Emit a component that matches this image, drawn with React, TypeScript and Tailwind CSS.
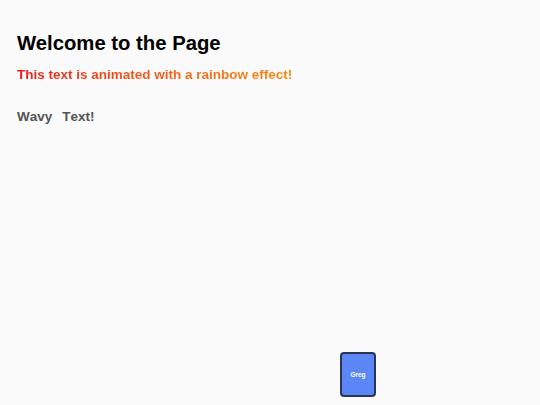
export default function App() {
  const wavy = "Wavy Text!".split("");

  return (
    <div className="relative h-[405px] w-[540px] overflow-hidden bg-[#fafafa] font-['Liberation_Sans',Arial,sans-serif]">
      <div className="px-[17px] pt-[31px]">
        <h1 className="text-[20.3px] font-bold leading-[24px] text-black">Welcome to the Page</h1>

        <p className="mt-[11px] inline-block bg-gradient-to-r from-[#e8141c] to-[#f58a12] bg-clip-text text-[13.5px] font-bold leading-[18px] text-transparent">
          This text is animated with a rainbow effect!
        </p>

        <div className="mt-[22px] flex text-[13.5px] font-bold leading-[18px] text-[#555555]">
          {wavy.map((ch, i) =>
            ch === " " ? (
              <span key={i} className="inline-block w-[10px]" />
            ) : (
              <span key={i} className="inline-block">
                {ch}
              </span>
            )
          )}
        </div>
      </div>

      {/* floating card */}
      <div className="absolute left-[340px] top-[352px] flex h-[45px] w-[36px] items-center justify-center rounded-[4px] border-2 border-[#2a3556] bg-[#5a86f6]">
        <span className="text-[6.5px] font-bold text-white">Greg</span>
      </div>
    </div>
  );
}
